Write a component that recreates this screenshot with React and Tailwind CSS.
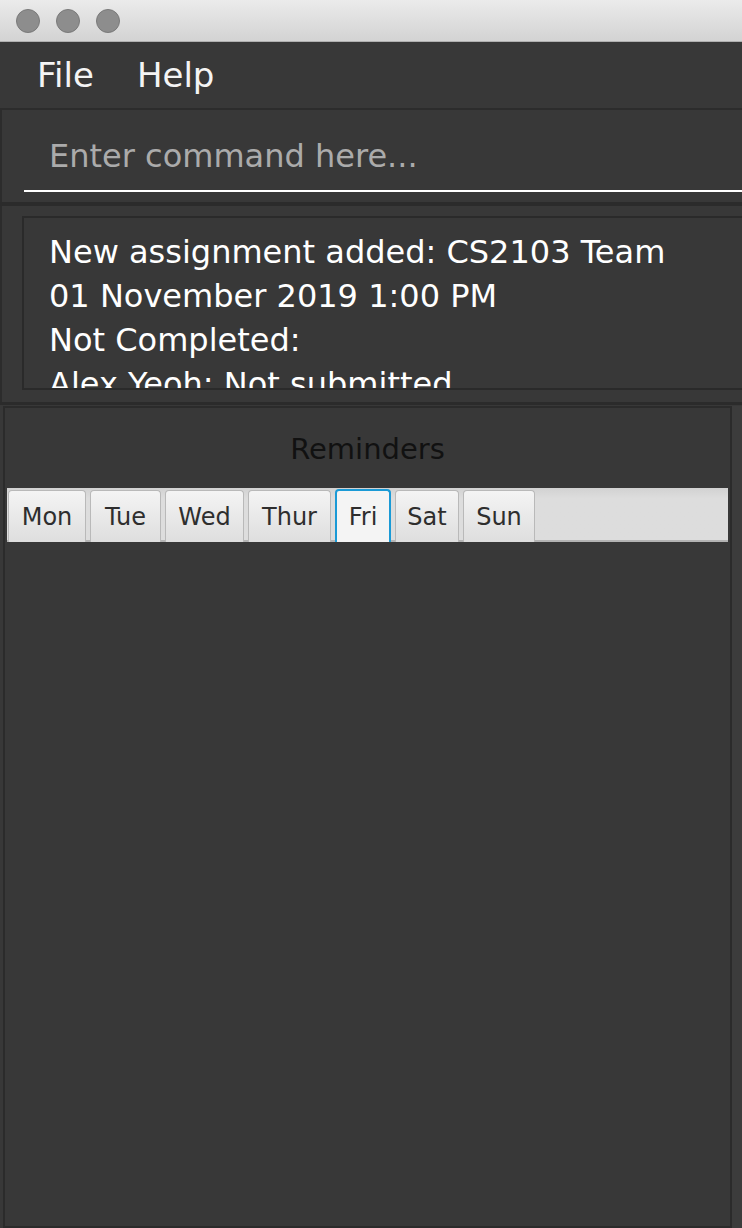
import React from 'react';

const days = [
  { label: 'Mon', w: 'w-[78px]' },
  { label: 'Tue', w: 'w-[71px]' },
  { label: 'Wed', w: 'w-[79px]' },
  { label: 'Thur', w: 'w-[83px]' },
  { label: 'Fri', w: 'w-[56px]', active: true },
  { label: 'Sat', w: 'w-[64px]' },
  { label: 'Sun', w: 'w-[72px]' },
];

const TitleBar = () => (
  <div className="h-[42px] shrink-0 flex items-center gap-4 pl-4 bg-gradient-to-b from-[#ebebeb] to-[#d3d3d3] border-b border-[#b0b0b0]">
    {[0, 1, 2].map((i) => (
      <div key={i} className="w-6 h-6 rounded-full bg-[#8d8d8d] border border-[#7a7a7a]" />
    ))}
  </div>
);

const MenuBar = () => (
  <div className="h-[66px] shrink-0 flex items-center gap-[43px] pl-[37px] text-[34px] text-[#f4f4f4]">
    <span>File</span>
    <span>Help</span>
  </div>
);

const CommandBox = () => (
  <div className="h-[92px] shrink-0 border-l-2 border-[#2c2c2c] pl-[22px] pt-[18px]">
    <input
      className="w-[760px] h-[64px] bg-transparent border-b-2 border-white pl-[25px] pb-[6px] text-[32px] text-white placeholder:text-[#ababab] outline-none"
      placeholder="Enter command here..."
    />
  </div>
);

const ResultDisplay = () => (
  <div className="h-[196px] shrink-0 border-l-2 border-[#2c2c2c] pl-[20px] pt-[10px]">
    <div className="w-[760px] h-[174px] border-2 border-[#2a2a2a] overflow-hidden pl-[25px] pt-[12px] text-[32px] leading-[44px] text-white">
      <div>New assignment added: CS2103 Team</div>
      <div>01 November 2019 1:00 PM</div>
      <div>Not Completed:</div>
      <div>Alex Yeoh: Not submitted</div>
    </div>
  </div>
);

const Reminders = () => (
  <div className="flex-1 flex min-h-0">
    <div className="ml-[3px] w-[729px] border-2 border-[#2b2b2b] flex flex-col">
      <div className="h-[80px] shrink-0 flex items-center justify-center pt-[4px] text-[29px] text-[#111111]">
        Reminders
      </div>
      <div className="mx-[2px] h-[54px] shrink-0 flex items-end gap-[4px] pl-[1px] bg-gradient-to-b from-[#d2d2d2] to-[#dddddd] to-[20%] border-b-2 border-[#b3b3b3]">
        {days.map((d) =>
          d.active ? (
            <div
              key={d.label}
              className={`${d.w} h-[53px] -mb-[2px] shrink-0 flex items-center justify-center rounded-t-[4px] border-2 border-b-0 border-[#1a9ad6] bg-[#f4f4f4] text-[24px] text-[#2e2e2e]`}
            >
              {d.label}
            </div>
          ) : (
            <div
              key={d.label}
              className={`${d.w} h-[52px] -mb-[2px] shrink-0 flex items-center justify-center rounded-t-[4px] border border-b-0 border-[#b9b9b9] bg-gradient-to-b from-[#f4f4f4] to-[#dedede] text-[24px] text-[#2e2e2e]`}
            >
              {d.label}
            </div>
          )
        )}
      </div>
      <div className="flex-1" />
    </div>
    <div className="flex-1 bg-[#3c3c3c]" />
  </div>
);

export default function App() {
  return (
    <div
      className="w-[742px] h-[1228px] overflow-hidden bg-[#383838] flex flex-col"
      style={{ fontFamily: '"DejaVu Sans", "Open Sans", sans-serif' }}
    >
      <TitleBar />
      <MenuBar />
      <div className="h-[2px] shrink-0 bg-[#2c2c2c]" />
      <CommandBox />
      <div className="h-[4px] shrink-0 bg-[#2b2b2b]" />
      <ResultDisplay />
      <div className="h-[3px] shrink-0 bg-[#2b2b2b]" />
      <div className="h-[1px] shrink-0" />
      <Reminders />
    </div>
  );
}
